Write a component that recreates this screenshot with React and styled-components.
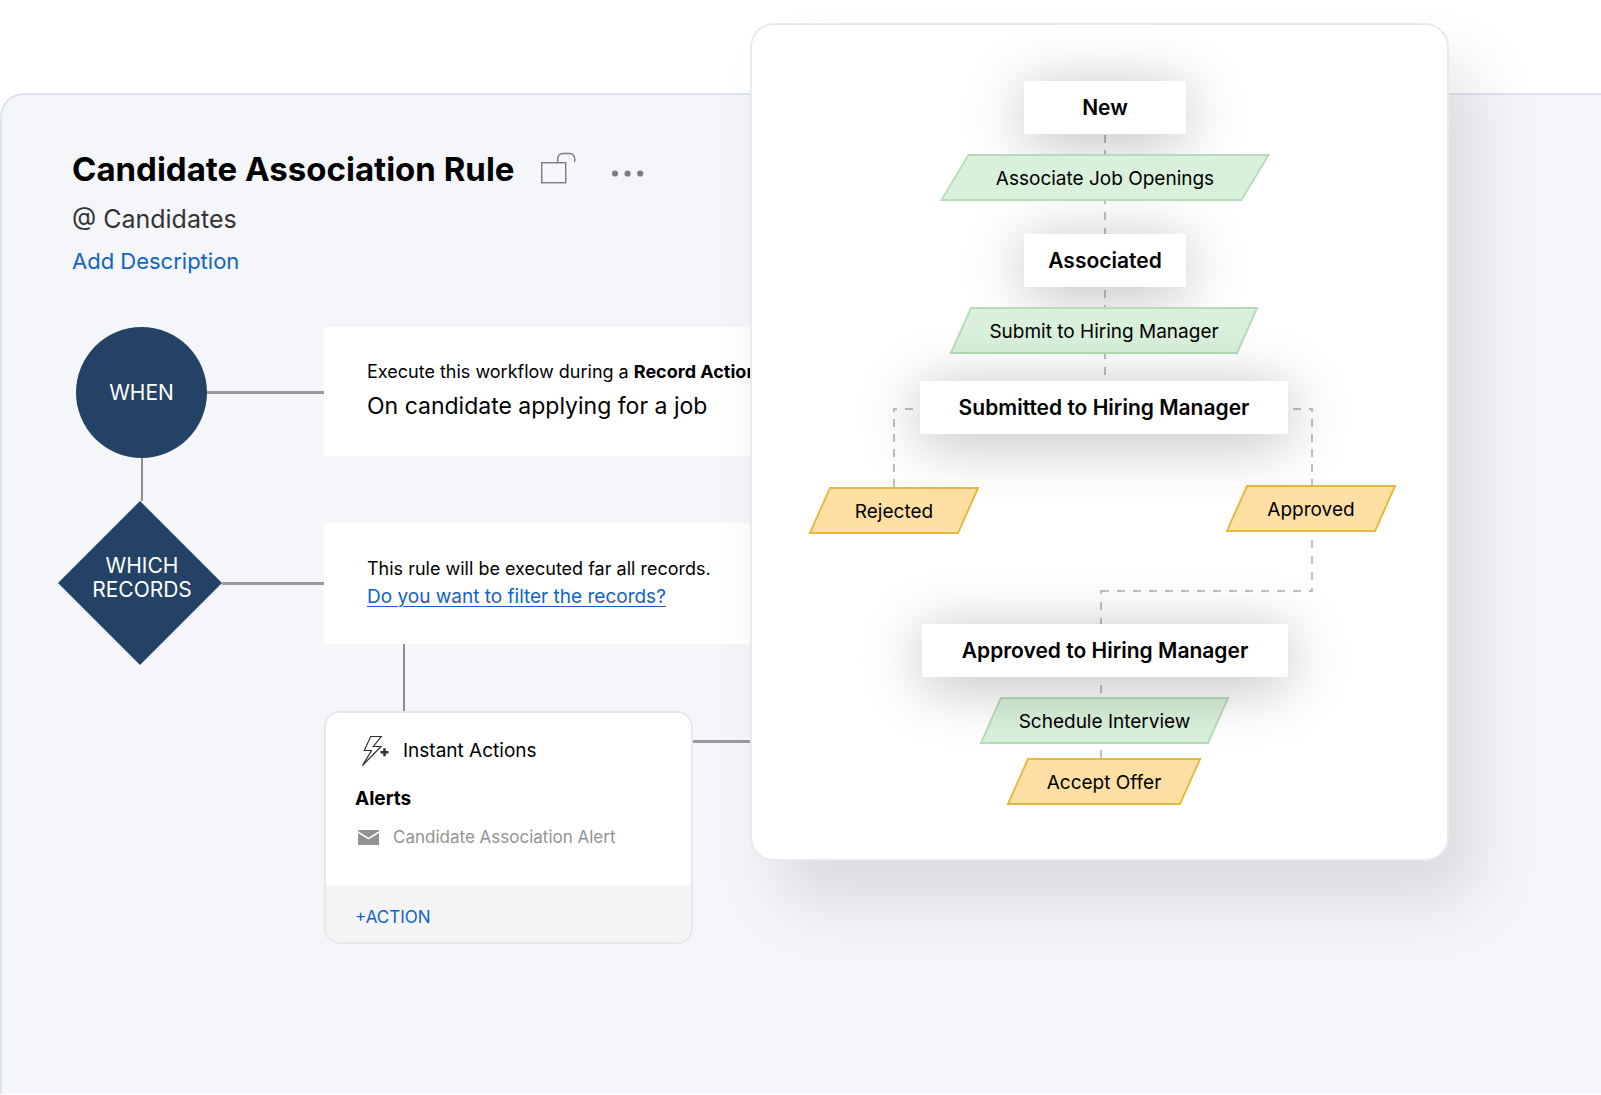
import React from "react";
import styled, { createGlobalStyle, css } from "styled-components";

const GlobalStyle = createGlobalStyle`
  *, *::before, *::after { box-sizing: border-box; }
  body {
    margin: 0;
    background: #fff;
    color: #000;
    font-family: Inter, "Liberation Sans", sans-serif;
  }
  h1, h2, h3, p { margin: 0; }
  svg { display: block; }
`;

const Page = styled.main`
  position: relative;
  min-height: 100vh;
  padding: 93px 0 1px;
  display: flex;
  overflow: hidden;
`;

const RulePanel = styled.section`
  flex: 1;
  padding: 54px 24px 96px 56px;
  background: #f4f6fa;
  border-top: 2px solid #dde4ec;
  border-left: 2px solid #dde4ec;
  border-top-left-radius: 24px;
`;

const RuleHeader = styled.header`
  display: flex;
  flex-direction: column;
  align-items: flex-start;
  padding-left: 14px;
`;

const TitleRow = styled.div`
  display: flex;
  align-items: center;
`;

const Title = styled.h1`
  font-size: 33px;
  line-height: 40px;
  font-weight: 700;
  white-space: nowrap;
`;

const IconButton = styled.button`
  display: flex;
  margin-left: ${(p) => p.$gap}px;
  padding: 0;
  border: 0;
  background: none;
  color: #7b7c7e;
  cursor: pointer;
`;

const Module = styled.p`
  margin-top: 12px;
  font-size: 25px;
  line-height: 36px;
  color: #333;
`;

const TextLink = styled.a`
  color: #1162c9;
  font-size: ${(p) => p.$size}px;
  line-height: ${(p) => p.$line}px;
  text-decoration: ${(p) => (p.$underline ? "underline" : "none")};
  text-decoration-thickness: 1px;
  text-underline-offset: 3px;
`;

const Workflow = styled.div`
  display: flex;
  max-width: 830px;
  margin-top: 42px;
`;

const StageColumn = styled.div`
  flex: 0 0 266px;
  display: flex;
  flex-direction: column;
`;

const StageRow = styled.div`
  display: flex;
  align-items: center;
  padding-left: ${(p) => p.$indent}px;
`;

const stageText = css`
  display: flex;
  align-items: center;
  justify-content: center;
  text-align: center;
  color: #fff;
  font-size: 21px;
  line-height: 24px;
`;

const CircleStage = styled.div`
  ${stageText}
  width: 131px;
  height: 131px;
  border-radius: 50%;
  background: #234266;
`;

const DiamondStage = styled.div`
  ${stageText}
  width: 164px;
  height: 164px;
  padding: 0 0 10px 4px;
  background: #234266;
  clip-path: polygon(50% 0, 100% 50%, 50% 100%, 0 50%);
`;

const HorizontalLine = styled.span`
  flex: 1;
  height: 3px;
  margin-top: ${(p) => p.$top || 0}px;
  background: #999b9f;
`;

const VerticalLine = styled.span`
  width: 2px;
  height: ${(p) => p.$length}px;
  margin-left: ${(p) => p.$left}px;
  background: #8c8e92;
`;

const DetailColumn = styled.div`
  flex: 1;
  min-width: 0;
`;

const DetailCard = styled.article`
  display: flex;
  flex-direction: column;
  justify-content: center;
  align-items: flex-start;
  height: ${(p) => p.$height}px;
  margin-bottom: ${(p) => p.$gap || 0}px;
  padding: 0 0 2px 43px;
  background: #fff;
  white-space: nowrap;
`;

const DetailText = styled.p`
  font-size: 18px;
  line-height: 28px;
`;

const DetailHeading = styled.h2`
  margin-top: 2px;
  font-size: 23px;
  line-height: 36px;
  font-weight: 400;
`;

const ActionRow = styled.div`
  display: flex;
  align-items: flex-start;
`;

const ActionCard = styled.article`
  width: 369px;
  border: 2px solid #e5e9ef;
  border-radius: 16px;
  overflow: hidden;
  background: #fff;
`;

const ActionBody = styled.div`
  padding: 22px 29px 32px;
`;

const ActionHead = styled.div`
  display: flex;
  align-items: center;
  gap: 13px;
  padding-left: 6px;
`;

const ActionTitle = styled.h2`
  font-size: 19px;
  line-height: 32px;
  font-weight: 400;
`;

const AlertTitle = styled.h3`
  margin-top: 16px;
  font-size: 19px;
  line-height: 32px;
  font-weight: 700;
`;

const AlertItem = styled.p`
  display: flex;
  align-items: center;
  gap: 14px;
  margin-top: 6px;
  padding-left: 3px;
  font-size: 17px;
  line-height: 32px;
  color: #929292;
`;

const ActionFooter = styled.footer`
  padding: 20px 29px 12px;
  background: #f5f5f5;
`;

const AddAction = styled.button`
  display: block;
  padding: 0;
  border: 0;
  background: none;
  color: #1162c9;
  font: inherit;
  font-size: 17px;
  line-height: 25px;
  cursor: pointer;
`;

const BlueprintCard = styled.section`
  position: absolute;
  top: 23px;
  left: 750px;
  right: 152px;
  display: flex;
  justify-content: center;
  border: 2px solid #e6ebf0;
  border-radius: 24px;
  background: #fff;
  box-shadow: 28px 42px 66px rgba(0, 0, 0, 0.11);
`;

const Canvas = styled.div`
  position: relative;
  flex: none;
  width: 695px;
  height: 834px;
`;

const Connectors = styled.svg`
  position: absolute;
  inset: 0;
  fill: none;
  stroke: #bfbfbf;
  stroke-width: 2;
`;

const placed = css`
  position: absolute;
  left: ${(p) => p.$x}px;
  top: ${(p) => p.$y}px;
  width: ${(p) => p.$w}px;
  display: flex;
  align-items: center;
  justify-content: center;
  white-space: nowrap;
`;

const StateNode = styled.div`
  ${placed}
  height: 53px;
  background: #fff;
  box-shadow: 0 8px 60px rgba(0, 0, 0, 0.27);
  font-size: 21px;
  font-weight: 600;
`;

const tones = {
  green: { fill: "#d9f0da", line: "#b5dcb7" },
  amber: { fill: "#ffdfa3", line: "#e8b83e" },
};

const TransitionNode = styled.div`
  ${placed}
  height: 47px;
  padding-top: 2px;
  font-size: 19px;
  font-weight: 400;
  isolation: isolate;

  &::before {
    content: "";
    position: absolute;
    inset: 0;
    z-index: -1;
    background: ${(p) => tones[p.$tone].fill};
    border: 2px solid ${(p) => tones[p.$tone].line};
    transform: skewX(-${(p) => p.$slant || 24}deg);
  }
`;

const nodes = [
  { kind: "state", label: "New", x: 272, y: 56, w: 162 },
  { kind: "state", label: "Associated", x: 272, y: 209, w: 162 },
  { kind: "move", label: "Associate Job Openings", x: 202, y: 129, w: 302, tone: "green", slant: 31 },
  { kind: "move", label: "Submit to Hiring Manager", x: 208, y: 282, w: 288, tone: "green" },
  { kind: "move", label: "Rejected", x: 67, y: 462, w: 150, tone: "amber" },
  { kind: "move", label: "Approved", x: 484, y: 460, w: 150, tone: "amber" },
  { kind: "state", label: "Submitted to Hiring Manager", x: 168, y: 356, w: 368 },
  { kind: "move", label: "Schedule Interview", x: 238, y: 672, w: 229, tone: "green" },
  { kind: "state", label: "Approved to Hiring Manager", x: 170, y: 599, w: 366 },
  { kind: "move", label: "Accept Offer", x: 265, y: 733, w: 174, tone: "amber" },
];

const dashes = [
  { d: "M353 110V129", dash: "8 7" },
  { d: "M353 171V209", dash: "8 8" },
  { d: "M353 265V282", dash: "8 7" },
  { d: "M353 326V356", dash: "8 8" },
  { d: "M141 384H168", dash: "8 8", offset: 4 },
  { d: "M142 383V462", dash: "8 7", offset: 4 },
  { d: "M561 384H536", dash: "8 8", offset: 4 },
  { d: "M560 383V460", dash: "8 7", offset: 4 },
  { d: "M560 567V508", dash: "8 8", offset: 4 },
  { d: "M561 566H348", dash: "8 8", offset: 4 },
  { d: "M349 565V599", dash: "8 8", offset: 4 },
  { d: "M349 660V668", dash: "8 8" },
  { d: "M349 725V733", dash: "8 8" },
];

const LockIcon = () => (
  <svg width="36" height="38" viewBox="0 0 36 38" fill="none" stroke="currentColor" strokeWidth="1.4">
    <rect x="1.7" y="12.7" width="24" height="20" />
    <path d="M17.7 12.7V8.5a5 5 0 0 1 5-5h7a5 5 0 0 1 5 5V12" />
  </svg>
);

const MoreIcon = () => (
  <svg width="34" height="16" viewBox="0 0 34 16" fill="currentColor">
    <circle cx="4" cy="12.5" r="3.1" />
    <circle cx="16.6" cy="12.5" r="3.1" />
    <circle cx="29.2" cy="12.5" r="3.1" />
  </svg>
);

const BoltIcon = () => (
  <svg width="29" height="32" viewBox="0 0 29 32" fill="none" stroke="#333" strokeWidth="1.2">
    <path d="M9.7 1.5H20.3L12.3 11.5H20L1.5 30.5L10.5 15.5H3.3Z" />
    <path d="M19.5 17.3H27.5M23.5 13.3V21.3" strokeWidth="2.6" />
  </svg>
);

const MailIcon = () => (
  <svg width="21" height="15" viewBox="0 0 21 15">
    <path fill="#929292" d="M0 0H21V15H0Z" />
    <path fill="none" stroke="#fff" strokeWidth="1.5" d="M0 2L10.5 8.7L21 2" />
  </svg>
);

export default function App() {
  return (
    <Page>
      <GlobalStyle />
      <RulePanel>
        <RuleHeader>
          <TitleRow>
            <Title>Candidate Association Rule</Title>
            <IconButton type="button" aria-label="Unlock rule" $gap={25}>
              <LockIcon />
            </IconButton>
            <IconButton type="button" aria-label="More options" $gap={35}>
              <MoreIcon />
            </IconButton>
          </TitleRow>
          <Module>@ Candidates</Module>
          <TextLink href="#description" $size={22} $line={48}>
            Add Description
          </TextLink>
        </RuleHeader>

        <Workflow>
          <StageColumn>
            <StageRow $indent={18}>
              <CircleStage>WHEN</CircleStage>
              <HorizontalLine />
            </StageRow>
            <VerticalLine $length={43} $left={83} />
            <StageRow $indent={0}>
              <DiamondStage>
                WHICH
                <br />
                RECORDS
              </DiamondStage>
              <HorizontalLine />
            </StageRow>
          </StageColumn>

          <DetailColumn>
            <DetailCard $height={129} $gap={67}>
              <DetailText>
                Execute this workflow during a <b>Record Action</b>
              </DetailText>
              <DetailHeading>On candidate applying for a job</DetailHeading>
            </DetailCard>
            <DetailCard $height={121}>
              <DetailText>This rule will be executed far all records.</DetailText>
              <TextLink href="#filter" $size={19} $line={28} $underline>
                Do you want to filter the records?
              </TextLink>
            </DetailCard>
            <ActionRow>
              <VerticalLine $length={67} $left={79} />
            </ActionRow>
            <ActionRow>
              <ActionCard>
                <ActionBody>
                  <ActionHead>
                    <BoltIcon />
                    <ActionTitle>Instant Actions</ActionTitle>
                  </ActionHead>
                  <AlertTitle>Alerts</AlertTitle>
                  <AlertItem>
                    <MailIcon />
                    Candidate Association Alert
                  </AlertItem>
                </ActionBody>
                <ActionFooter>
                  <AddAction type="button">+ACTION</AddAction>
                </ActionFooter>
              </ActionCard>
              <HorizontalLine $top={29} />
            </ActionRow>
          </DetailColumn>
        </Workflow>
      </RulePanel>

      <BlueprintCard aria-label="Hiring blueprint">
        <Canvas>
          <Connectors width="695" height="834" viewBox="0 0 695 834">
            {dashes.map((line) => (
              <path key={line.d} d={line.d} strokeDasharray={line.dash} strokeDashoffset={line.offset || 0} />
            ))}
          </Connectors>
          {nodes.map((n) =>
            n.kind === "state" ? (
              <StateNode key={n.label} $x={n.x} $y={n.y} $w={n.w}>
                {n.label}
              </StateNode>
            ) : (
              <TransitionNode key={n.label} $x={n.x} $y={n.y} $w={n.w} $tone={n.tone} $slant={n.slant}>
                {n.label}
              </TransitionNode>
            )
          )}
        </Canvas>
      </BlueprintCard>
    </Page>
  );
}
